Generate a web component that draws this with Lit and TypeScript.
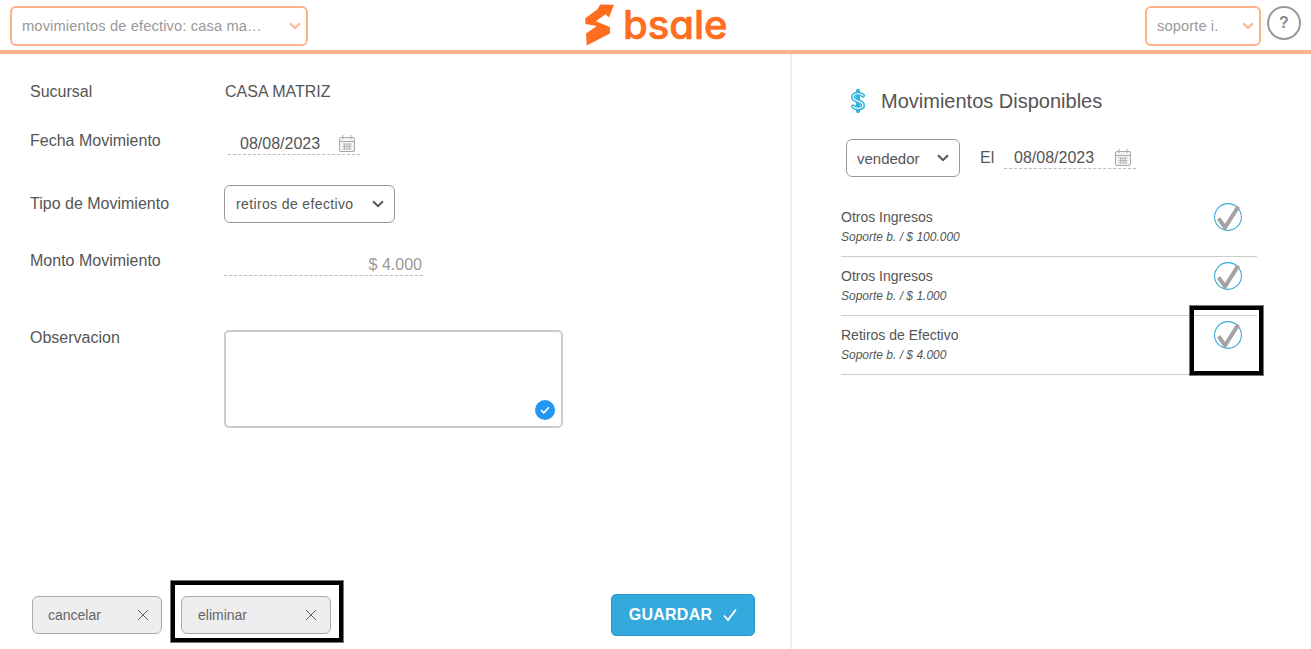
import { LitElement, html, css, svg } from "lit";
import { customElement } from "lit/decorators.js";

const cal = html`<svg class="cal" viewBox="0 0 18 19" width="18" height="19" fill="none" stroke="#a8a8a8">
  <rect x="1.5" y="3.5" width="15" height="14" rx="1.5" fill="#f4f4f4"/><path d="M5 1v4M13 1v4M1.5 7.5h15"/>
  <path d="M4.5 10h9M4.5 12.5h9M4.5 15h9M6.5 9.5v6M9 9.5v6M11.5 9.5v6" stroke-width=".8"/></svg>`;
const chev = (c: string, w = 2) => html`<svg class="chev" viewBox="0 0 12 8" width="12" height="8" fill="none" stroke=${c} stroke-width=${w}><path d="M1 1.2l5 5 5-5"/></svg>`;
const x = html`<svg viewBox="0 0 12 12" width="12" height="12" fill="none" stroke="#666" stroke-width="1"><path d="M1 1l10 10M11 1L1 11"/></svg>`;
const check = svg`<circle cx="14" cy="14" r="13.4" fill="#fff" stroke="#35acd9" stroke-width="1.1"/><path d="M4.600 15.300L11 24.500L24.300 3.700" fill="none" stroke="#a3a3a3" stroke-width="4"/>`;

const items = [
  ["Otros Ingresos", "Soporte b. / $ 100.000"],
  ["Otros Ingresos", "Soporte b. / $ 1.000"],
  ["Retiros de Efectivo", "Soporte b. / $ 4.000"],
];

@customElement("app-root")
export class AppRoot extends LitElement {
  static styles = css`
    :host { display: block; position: relative; width: 1311px; height: 649px; overflow: hidden; background: #fff;
      font-family: "Liberation Sans", Arial, sans-serif; color: #555; font-size: 16px; }
    * { box-sizing: border-box; }
    header { height: 54px; border-bottom: 4px solid #ffb38a; display: flex; align-items: flex-start; padding: 6px 10px 0; }
    .hsel { height: 40px; border: 2px solid #ffb38a; border-radius: 6px; display: flex; align-items: center; justify-content: space-between;
      color: #999; font-size: 14.7px; padding: 0 5px 0 10px; }
    .hsel.a { width: 298px; letter-spacing: .12px; }
    .hsel.b { width: 116px; letter-spacing: .1px; }
    .logo { flex: 1; display: flex; align-items: flex-start; gap: 8px; padding-left: 276px; margin-top: -3px; }
    .logo span { font-family: Inter, sans-serif; font-feature-settings: "cv11" 1; font-weight: 500; font-size: 40px; line-height: 44px; color: #ff6d1f; -webkit-text-stroke: .7px #ff6d1f; }
    .help { width: 34px; height: 34px; border: 2px solid #999; border-radius: 50%; margin-left: 6px; color: #888; font-weight: 700; font-size: 16px; display: flex; align-items: center; justify-content: center; }

    main { display: grid; grid-template-columns: 790px 2px 1fr; height: 595px; }
    .div { background: #eeeeee; }
    .left { display: flex; flex-direction: column; justify-content: space-between; padding: 0 35px 13px 30px; }
    .form { display: grid; grid-template-columns: 194px 1fr; grid-template-rows: 78px 53px 66px 79px 1fr; }
    .lab { font-size: 16px; line-height: 18px; }
    .lab.r1 { padding-top: 29px; }
    .lab.r3 { padding-top: 10px; }
    .lab.r4 { padding-top: 1px; }
    .lab.r5 { margin-top: -1px; }
    .val { font-size: 16px; line-height: 18px; }
    .val.r1 { padding-top: 29px; padding-left: 1px; }
    .date { display: flex; align-items: center; justify-content: space-between; width: 132px; height: 23px; border-bottom: 1px dashed #bbb; padding: 1px 4px 0 10px; font-size: 16px; }
    .date.f { margin: 0 0 0 4px; padding-left: 12px; }
    .sel { height: 38px; border: 1px solid #999; border-radius: 6px; display: flex; align-items: center; justify-content: space-between; padding: 0 10px 0 10px; font-size: 15px; background: #fff; }
    .sel.t { width: 171px; padding-left: 11px; }
    .sel.t span { letter-spacing: .37px; }
    .sel.v { width: 114px; }
    .monto { width: 199px; height: 21px; border-bottom: 1px dashed #bbb; text-align: right; color: #999; font-size: 16px; line-height: 20px; padding-right: 1px; margin-top: 4px; }
    .area { width: 339px; height: 98px; border: 2px solid #ccc; border-radius: 5px; position: relative; }
    .ok { position: absolute; right: 6px; bottom: 6px; width: 20px; height: 20px; border-radius: 50%; background: #2196f3; display: flex; align-items: center; justify-content: center; }

    .foot { display: flex; align-items: center; padding-left: 2px; }
    .btn { height: 38px; width: 130px; background: #eee; border: 1px solid #aaa; border-radius: 6px; display: flex; align-items: center; justify-content: space-between; padding: 0 12px 0 15px; font-size: 14px; color: #666; margin-right: 19px; }
    .btn.e { width: 150px; margin-right: 0; padding-left: 16px; padding-right: 13px; }
    .save { margin-left: auto; width: 144px; height: 42px; background: #33a9dd; border: 1px solid #2b96c6; border-radius: 5px; color: #fff; font-weight: 700; font-size: 16px; display: flex; align-items: center; justify-content: center; gap: 11px; letter-spacing: .25px; }

    .right { padding: 0 54px 0 49px; }
    .head { display: flex; align-items: center; gap: 15px; height: 24px; margin: 35px 0 0 9px; font-size: 20px; }
    .filters { display: flex; align-items: center; margin: 26px 0 0 5px; }
    .el { margin: 0 0 0 20px; font-size: 16px; width: 24px; }
    .filters .date { margin-top: -1px; }
    .list { margin-top: 21px; }
    .item { height: 59px; border-bottom: 1px solid #ccc; display: flex; justify-content: space-between; padding: 11px 15px 0 0; }
    .t { font-size: 14px; line-height: 16px; }
    .s { font-size: 12px; line-height: 14px; font-style: italic; margin-top: 5px; }
    .item svg { margin-top: -6px; }
    .mark { position: absolute; border: 5px solid #000; outline: 1px solid #777; outline-offset: -1px; pointer-events: none; }
    .m1 { left: 170px; top: 580px; width: 174px; height: 63px; }
    .m2 { left: 1189px; top: 305px; width: 75px; height: 71px; }
  `;

  render() {
    return html`
      <header>
        <div class="hsel a"><span>movimientos de efectivo: casa ma…</span>${chev("#ffb38a")}</div>
        <div class="logo">
          <svg viewBox="72 10 92 130" width="31" height="44" fill="#ff6d1f"><path d="M76 55 L112 28 L120 14 L161 15 L146 53 L136 43 L107 64 L149 81 L149 100 L80 136 L78 100 L110 78 L76 72 Z"/></svg>
          <span>bsale</span>
        </div>
        <div class="hsel b"><span>soporte i.</span>${chev("#ffb38a")}</div>
        <div class="help">?</div>
      </header>
      <main>
        <section class="left">
          <div class="form">
            <div class="lab r1">Sucursal</div><div class="val r1">CASA MATRIZ</div>
            <div class="lab r2">Fecha Movimiento</div><div><div class="date f"><span>08/08/2023</span>${cal}</div></div>
            <div class="lab r3">Tipo de Movimiento</div><div><div class="sel t"><span>retiros de efectivo</span>${chev("#555")}</div></div>
            <div class="lab r4">Monto Movimiento</div><div><div class="monto">$ 4.000</div></div>
            <div class="lab r5">Observacion</div>
            <div><div class="area"><div class="ok"><svg viewBox="0 0 10 8" width="10" height="8" fill="none" stroke="#fff" stroke-width="1.6"><path d="M1 4l2.8 2.8L9 1.2"/></svg></div></div></div>
          </div>
          <div class="foot">
            <div class="btn"><span>cancelar</span>${x}</div>
            <div class="btn e"><span>eliminar</span>${x}</div>
            <div class="save"><span>GUARDAR</span><svg viewBox="0 0 14 12" width="14" height="14" fill="none" stroke="#fff" stroke-width="1.8"><path d="M1 6.500l4 4.500L13 .5"/></svg></div>
          </div>
        </section>
        <div class="div"></div>
        <section class="right">
          <div class="head">
            <svg viewBox="0 0 16 24" width="16" height="24" fill="none">
              <g stroke="#35b4e0" stroke-width="4.2" stroke-linecap="round"><path d="M13 6.5C11 4 3.5 4 3 8c-.5 4.5 10 3.500 10 8.500 0 3.500-7.500 3.500-10 1"/><path d="M8 2v20"/></g>
              <g stroke="#fff" stroke-width="1.1" stroke-linecap="round"><path d="M13 6.500C11 4 3.500 4 3 8c-.5 4.500 10 3.500 10 8.500 0 3.500-7.500 3.500-10 1"/></g>
            </svg>
            <span>Movimientos Disponibles</span>
          </div>
          <div class="filters">
            <div class="sel v"><span>vendedor</span>${chev("#555")}</div>
            <div class="el">El</div>
            <div class="date"><span>08/08/2023</span>${cal}</div>
          </div>
          <div class="list">
            ${items.map(([t, s]) => html`<div class="item"><div><div class="t">${t}</div><div class="s">${s}</div></div>
              <svg viewBox="0 0 28 28" width="28" height="28">${check}</svg></div>`)}
          </div>
        </section>
      </main>
      <div class="mark m1"></div>
      <div class="mark m2"></div>
    `;
  }
}
